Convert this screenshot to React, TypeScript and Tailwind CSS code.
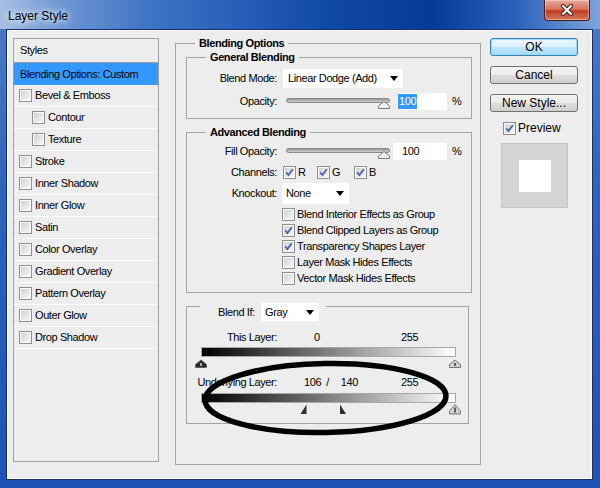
import React from 'react';

// Win7-style checkbox
const Check: React.FC<{ checked?: boolean }> = ({ checked }) => (
  <svg width="13" height="13" viewBox="0 0 13 13" className="shrink-0">
    <defs>
      <linearGradient id="cbFill" x1="0" y1="0" x2="1" y2="1">
        <stop offset="0" stopColor="#d2d2d2" />
        <stop offset="1" stopColor="#f6f6f6" />
      </linearGradient>
    </defs>
    <rect x="0.5" y="0.5" width="12" height="12" fill="#fbfbfb" stroke="#8e8f8f" />
    <rect x="2" y="2" width="9" height="9" fill="url(#cbFill)" />
    {checked && <path d="M3.2 6.4 5.4 9 9.8 3.2" fill="none" stroke="#4563b4" strokeWidth="1.8" />}
  </svg>
);

const Select: React.FC<{ value: string; className: string }> = ({ value, className }) => (
  <div className={`flex items-center justify-between bg-white pr-[5px] ${className}`}>
    <span>{value}</span>
    <svg width="8" height="5" viewBox="0 0 8 5" className="shrink-0">
      <path d="M0 0h8L4 5z" fill="#000" />
    </svg>
  </div>
);

const Slider: React.FC = () => (
  <svg width="110" height="17" viewBox="0 0 110 17" className="shrink-0">
    <defs>
      <linearGradient id="track" x1="0" y1="0" x2="0" y2="1">
        <stop offset="0" stopColor="#8c8c8c" />
        <stop offset="1" stopColor="#dadada" />
      </linearGradient>
    </defs>
    <rect x="3.5" y="5.5" width="103" height="4" rx="2" fill="url(#track)" stroke="#8a8a8a" />
    <path d="M95.5 15.5V13L101 8.5 106.5 13V15.5Z" fill="#efefef" stroke="#7c7c7c" />
  </svg>
);

const fullMarker = (cx: number, t: number, b: number) =>
  `M${cx - 5.5} ${b}V${b - 3}L${cx} ${t}L${cx + 5.5} ${b - 3}V${b}Z`;

const Markers: React.FC<{ split?: boolean; t: number; b: number }> = ({ split, t, b }) => (
  <svg width="280" height="12" viewBox="0 0 280 12" className="block">
    {split ? (
      <>
        <path d={`M113.5 ${b}L119.5 ${t}V${b}Z`} fill="#2e2e2e" />
        <path d={`M153 ${t}V${b}H159Z`} fill="#2e2e2e" />
      </>
    ) : (
      <>
        <path d={fullMarker(14, t, b)} fill="#2a2a2a" stroke="#555" strokeWidth="0.8" />
        <line x1="14" y1={t + 3} x2="14" y2={b - 1.5} stroke="#fff" strokeWidth="1.2" />
      </>
    )}
    <path d={fullMarker(268, t, b)} fill="#cfcfcf" stroke="#6a6a6a" strokeWidth="0.9" />
    <line x1="268" y1={t + 3} x2="268" y2={b - 1.5} stroke="#111" strokeWidth="1.2" />
  </svg>
);

const styleRows: { label: string; indent?: boolean }[] = [
  { label: 'Bevel & Emboss' },
  { label: 'Contour', indent: true },
  { label: 'Texture', indent: true },
  { label: 'Stroke' },
  { label: 'Inner Shadow' },
  { label: 'Inner Glow' },
  { label: 'Satin' },
  { label: 'Color Overlay' },
  { label: 'Gradient Overlay' },
  { label: 'Pattern Overlay' },
  { label: 'Outer Glow' },
  { label: 'Drop Shadow' },
];

const options: { label: string; checked: boolean }[] = [
  { label: 'Blend Interior Effects as Group', checked: false },
  { label: 'Blend Clipped Layers as Group', checked: true },
  { label: 'Transparency Shapes Layer', checked: true },
  { label: 'Layer Mask Hides Effects', checked: false },
  { label: 'Vector Mask Hides Effects', checked: false },
];

const btn =
  'w-[88px] h-[18px] rounded-[3px] text-[12px] leading-none tracking-normal text-black flex items-center justify-center';

export default function App() {
  return (
    <div className="w-[600px] h-[488px] flex flex-col bg-[linear-gradient(180deg,#4d7cc6_0%,#2f63bb_40%,#1c53b5_100%)] pl-[6px] pr-[7px] pb-[8px] font-['Liberation_Sans',Arial,sans-serif] text-black">
      {/* title bar */}
      <div className="-ml-[6px] -mr-[7px] h-[29px] flex items-start justify-between bg-[linear-gradient(90deg,#a6bfe2_0%,#6f98d4_10%,#3f73c3_25%,#2a61b9_38%,#1048a6_55%,#063a99_72%,#2a62ba_86%,#7ea5da_100%)]">
        <span className="mt-[9px] ml-[8px] text-[12px] leading-[14px] [text-shadow:0_0_6px_#fff,0_0_10px_#fff]">
          Layer Style
        </span>
        <div className="mr-[10px] w-[46px] h-[21px] rounded-b-[4px] border border-t-0 border-[#4a1d16] bg-[linear-gradient(180deg,#e7ab9f_0%,#d9745f_45%,#c03a20_55%,#d47a5e_100%)] shadow-[inset_0_0_0_1px_rgba(255,255,255,0.35)] flex items-center justify-center">
          <svg width="14" height="12" viewBox="0 0 14 12">
            <path d="M3 2 11 10M11 2 3 10" stroke="#3a2020" strokeWidth="4" strokeLinecap="round" />
            <path d="M3 2 11 10M11 2 3 10" stroke="#fff" strokeWidth="2.2" strokeLinecap="round" />
          </svg>
        </div>
      </div>

      {/* client area */}
      <div className="relative flex-1 flex items-start bg-[#ededed] border border-[#12316e] shadow-[inset_1px_1px_0_#ffffff,inset_-1px_-1px_0_#ffffff] pl-[6px] text-[11px] leading-[13px] tracking-[-0.4px]">
        {/* styles list */}
        <div className="mt-[8px] w-[146px] h-[424px] border border-[#a0a0a0] flex flex-col">
          <div className="h-[24px] border-b border-[#a0a0a0] flex items-center pl-[6px]">Styles</div>
          <div className="h-[22px] bg-[#3399ff] flex items-center pl-[6px]">Blending Options: Custom</div>
          {styleRows.map(r => (
            <div
              key={r.label}
              className={`h-[22px] border-b border-[#fbfbfb] flex items-center gap-[3px] ${r.indent ? 'pl-[18px]' : 'pl-[5px]'}`}
            >
              <Check />
              <span>{r.label}</span>
            </div>
          ))}
        </div>

        {/* Blending Options */}
        <fieldset className="mt-[6px] ml-[16px] w-[306px] h-[429px] border border-[#a3a3a3]">
          <legend className="ml-[19px] px-[4px] font-bold leading-[14px]">Blending Options</legend>

          <fieldset className="ml-[10px] w-[286px] h-[69px] border border-[#a3a3a3]">
            <legend className="ml-[19px] px-[4px] font-bold leading-[14px]">General Blending</legend>
            <div className="pt-[5px] flex flex-col">
              <div className="h-[19px] flex items-center">
                <span className="w-[90px] text-right">Blend Mode:</span>
                <Select value="Linear Dodge (Add)" className="ml-[6px] w-[120px] h-[19px] pl-[5px]" />
              </div>
              <div className="mt-[5px] h-[17px] flex items-center">
                <span className="w-[90px] text-right">Opacity:</span>
                <div className="ml-[6px]"><Slider /></div>
                <div className="ml-[4px] w-[50px] h-[17px] bg-white flex items-center pl-[1px]">
                  <span className="bg-[#3399ff] text-white leading-[15px] px-[1px]">100</span>
                </div>
                <span className="ml-[5px]">%</span>
              </div>
            </div>
          </fieldset>

          <fieldset className="mt-[6px] ml-[10px] w-[286px] h-[168px] border border-[#a3a3a3]">
            <legend className="ml-[19px] px-[4px] font-bold leading-[14px]">Advanced Blending</legend>
            <div className="pt-[4px] flex flex-col">
              <div className="h-[17px] flex items-center">
                <span className="w-[90px] text-right">Fill Opacity:</span>
                <div className="ml-[6px]"><Slider /></div>
                <div className="w-[54px] h-[17px] bg-white flex items-center pl-[9px]">100</div>
                <span className="ml-[5px]">%</span>
              </div>
              <div className="mt-[4px] h-[17px] flex items-center">
                <span className="w-[90px] text-right">Channels:</span>
                <div className="ml-[6px] flex items-center">
                  <div className="w-[34px] flex items-center gap-[2px]"><Check checked /><span>R</span></div>
                  <div className="w-[37px] flex items-center gap-[2px]"><Check checked /><span>G</span></div>
                  <div className="flex items-center gap-[2px]"><Check checked /><span>B</span></div>
                </div>
              </div>
              <div className="mt-[2px] h-[21px] flex items-center">
                <span className="w-[90px] text-right">Knockout:</span>
                <Select value="None" className="ml-[5px] w-[67px] h-[21px] pl-[4px]" />
              </div>
              <div className="mt-[2px] pl-[95px] flex flex-col">
                {options.map(o => (
                  <div key={o.label} className="h-[16px] flex items-center gap-[2px]">
                    <Check checked={o.checked} />
                    <span>{o.label}</span>
                  </div>
                ))}
              </div>
            </div>
          </fieldset>

          {/* Blend If */}
          <div className="relative mt-[13px] ml-[10px] w-[283px] h-[118px] border border-[#a3a3a3] pt-[23px]">
            <div className="absolute left-[13px] top-[-4px] h-[18px] flex items-center bg-[#ededed] pl-[18px] pr-[7px]">
              <span className="w-[43px]">Blend If:</span>
              <Select value="Gray" className="w-[58px] h-[18px] pl-[4px]" />
            </div>
            <div className="h-[14px] flex items-center">
              <span className="w-[90px] text-right">This Layer:</span>
              <span className="w-[124px] pl-[37px]">0</span>
              <span>255</span>
            </div>
            <div className="mt-[3px] ml-[14px] w-[255px] h-[10px] border border-[#a8a8a8] bg-[linear-gradient(90deg,#000_0%,#fff_100%)]" />
            <Markers t={3} b={10.5} />
            <div className="mt-[6px] h-[14px] flex items-center">
              <span className="w-[90px] text-right">Underlying Layer:</span>
              <span className="w-[124px] pl-[27px] flex">
                <span>106</span>
                <span className="ml-[5px]">/</span>
                <span className="ml-[12px]">140</span>
              </span>
              <span>255</span>
            </div>
            <div className="mt-[4px] ml-[14px] w-[255px] h-[10px] border border-[#a8a8a8] bg-[linear-gradient(90deg,#000_0%,#fff_100%)]" />
            <Markers split t={1.5} b={11} />
          </div>
        </fieldset>

        {/* buttons */}
        <div className="mt-[8px] ml-[9px] w-[88px] flex flex-col">
          <button className={`${btn} border border-[#3c7fb1] bg-[linear-gradient(180deg,#eaf6fd_0%,#d9f0fc_50%,#bee6fd_51%,#a7d9f5_100%)] shadow-[inset_0_0_0_1px_#98dcf8]`}>
            OK
          </button>
          <button className={`${btn} mt-[10px] border border-[#707070] bg-[linear-gradient(180deg,#f3f3f3_0%,#ebebeb_50%,#dddddd_51%,#cfcfcf_100%)]`}>
            Cancel
          </button>
          <button className={`${btn} mt-[10px] border border-[#707070] bg-[linear-gradient(180deg,#f3f3f3_0%,#ebebeb_50%,#dddddd_51%,#cfcfcf_100%)]`}>
            New Style...
          </button>
          <div className="mt-[8px] h-[17px] pl-[13px] flex items-center gap-[2px]">
            <Check checked />
            <span className="text-[12px] tracking-normal">Preview</span>
          </div>
          <div className="mt-[6px] ml-[11px] w-[67px] h-[65px] bg-[#d4d4d4] border border-[#c6c6c6] flex items-center justify-center">
            <div className="w-[32px] h-[32px] bg-white" />
          </div>
        </div>

        {/* hand-drawn annotation */}
        <svg className="absolute left-0 top-0 pointer-events-none" width="585" height="449" viewBox="0 0 585 449">
          <ellipse cx="318.5" cy="368" rx="120.5" ry="34.5" fill="none" stroke="#000" strokeWidth="5.5" transform="rotate(-1 318.5 368)" />
        </svg>
      </div>
    </div>
  );
}
